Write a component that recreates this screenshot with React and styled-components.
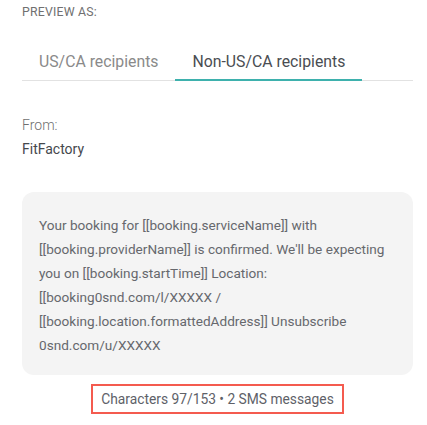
import { useState } from "react";
import styled, { createGlobalStyle } from "styled-components";

const GlobalStyle = createGlobalStyle`
  body {
    margin: 0;
    background: #ffffff;
    font-family: Roboto, "Liberation Sans", sans-serif;
  }
`;

const Page = styled.div`
  padding: 5px 14px 0 22px;
`;

const Label = styled.div`
  font-size: 12.3px;
  line-height: 14px;
  color: #707070;
  letter-spacing: 0.2px;
`;

const Tabs = styled.div`
  display: flex;
  margin-top: 24px;
  border-bottom: 1px solid #e2e2e2;
`;

const Tab = styled.button`
  all: unset;
  cursor: pointer;
  height: 38px;
  padding: 0 17px;
  font-size: 15.8px;
  color: ${(p) => (p.$active ? "#4a4d52" : "#8a8a8a")};
  box-sizing: border-box;
  border-bottom: 2px solid ${(p) => (p.$active ? "#3eb1ad" : "transparent")};
  margin-bottom: -1px;
  display: flex;
  align-items: center;
`;

const Sender = styled.div`
  margin-top: 36px;
  display: flex;
  flex-direction: column;
  gap: 8px;
`;

const SenderLabel = styled.div`
  font-size: 14px;
  line-height: 16px;
  color: #6f6f6f;
  font-weight: 300;
`;

const SenderName = styled.div`
  font-size: 14px;
  line-height: 16px;
  color: #45484d;
`;

const Bubble = styled.div`
  margin-top: 35px;
  background: #f4f4f4;
  border-radius: 12px;
  padding: 21px 17px 18px 17px;
  font-size: 13.6px;
  line-height: 24px;
  color: #66686d;
`;

const Counter = styled.div`
  margin: 9px auto 0;
  width: fit-content;
  border: 2px solid #f45b4f;
  padding: 0 8px;
  height: 30px;
  box-sizing: border-box;
  display: flex;
  align-items: center;
  font-size: 13.8px;
  color: #5e6168;
`;

export default function App() {
  const [tab, setTab] = useState(1);
  return (
    <>
      <GlobalStyle />
      <Page>
        <Label>PREVIEW AS:</Label>
        <Tabs>
          <Tab $active={tab === 0} onClick={() => setTab(0)}>
            US/CA recipients
          </Tab>
          <Tab $active={tab === 1} onClick={() => setTab(1)}>
            Non-US/CA recipients
          </Tab>
        </Tabs>
        <Sender>
          <SenderLabel>From:</SenderLabel>
          <SenderName>FitFactory</SenderName>
        </Sender>
        <Bubble>
          Your booking for [[booking.serviceName]] with
          <br />
          [[booking.providerName]] is confirmed. We'll be expecting
          <br />
          you on [[booking.startTime]] Location:
          <br />
          [[booking0snd.com/l/XXXXX /
          <br />
          [[booking.location.formattedAddress]] Unsubscribe
          <br />
          0snd.com/u/XXXXX
        </Bubble>
        <Counter>Characters 97/153 • 2 SMS messages</Counter>
      </Page>
    </>
  );
}
